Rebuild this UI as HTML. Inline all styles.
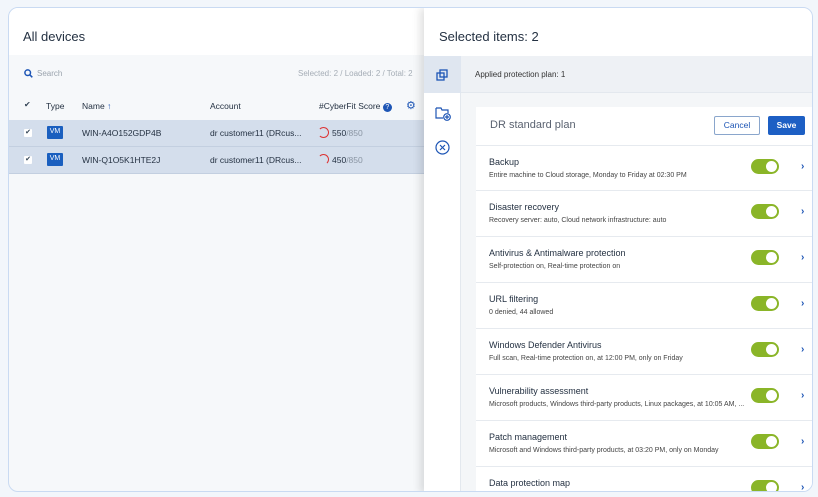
<!DOCTYPE html>
<html><head><style>
*{box-sizing:border-box;margin:0;padding:0}
body{width:818px;height:497px;background:#f2f6fb;font-family:"Liberation Sans",sans-serif;position:relative;overflow:hidden;color:#243142}
.frame{position:absolute;left:8px;top:7px;width:805px;height:485px;border:1px solid #c9daf2;border-radius:10px;background:#f6f8fa;overflow:hidden}
.lhead{position:absolute;left:0;top:0;width:420px;height:47px;background:#fff}
.abs{position:absolute;white-space:nowrap}
.row{position:absolute;left:0;width:420px;height:27px;background:#d4deec;border-bottom:1px solid #c3cfe0;font-size:8.5px}
.vm{position:absolute;left:38px;top:6px;width:16px;height:13px;background:#1a5fbf;color:#fff;font-size:7px;text-align:center;line-height:12px;border-radius:1px}
.cb{position:absolute;left:15px;top:9px;width:8px;height:8px;background:#fff;border-radius:1px;font-size:7px;line-height:8px;text-align:center;color:#345}
.right{position:absolute;left:415px;top:0;width:390px;height:485px;background:#fff;box-shadow:-4px 0 8px rgba(0,0,0,.12)}
.side{position:absolute;left:0;top:48px;width:37px;height:437px;background:#fff;border-right:1px solid #e3e8ee}
.gray{position:absolute;left:37px;top:48px;width:353px;height:437px;background:#f4f6f8}
.card{position:absolute;left:52px;top:99px;width:338px;height:400px;background:#fff}
.item{position:absolute;left:0;width:338px;height:46px;border-top:1px solid #e6eaef}
.t{position:absolute;left:13px;top:11px;font-size:9px;color:#243142}
.s{position:absolute;left:13px;top:26px;font-size:7px;color:#444}
.tg{position:absolute;left:275px;top:13px;width:28px;height:15px;border-radius:8px;background:#8ab528}
.tg:after{content:"";position:absolute;right:2px;top:2px;width:11px;height:11px;border-radius:50%;background:#fff}
.ch{position:absolute;left:325px;top:15px;font-size:10px;color:#1d55b5;font-weight:bold}
</style></head><body>
<div class="frame">
 <div class="lhead"><div class="abs" style="left:14px;top:21px;font-size:13px;color:#243142">All devices</div></div>
 <svg class="abs" style="left:15px;top:61px" width="9" height="9" viewBox="0 0 9 9" fill="none" stroke="#1d55b5" stroke-width="1.5"><circle cx="3.7" cy="3.7" r="2.8"/><path d="M5.8 5.8L8.3 8.3"/></svg>
 <div class="abs" style="left:28px;top:61px;font-size:8px;color:#9aa3ad">Search</div>
 <div class="abs" style="left:289px;top:61px;font-size:8px;color:#a5adb6">Selected: 2 / Loaded: 2 / Total: 2</div>
 <div class="abs" style="left:15px;top:92px;font-size:8px;color:#345">&#10004;</div>
 <div class="abs" style="left:37px;top:93px;font-size:8.5px">Type</div>
 <div class="abs" style="left:73px;top:93px;font-size:8.5px">Name <span style="color:#1d55b5">&#8593;</span></div>
 <div class="abs" style="left:201px;top:93px;font-size:8.5px">Account</div>
 <div class="abs" style="left:310px;top:93px;font-size:8.5px">#CyberFit Score <span style="display:inline-block;width:9px;height:9px;border-radius:50%;background:#1d55b5;color:#fff;font-size:7px;text-align:center;line-height:9px">?</span></div>
 <div class="abs" style="left:397px;top:91px;font-size:11px;color:#1d55b5">&#9881;</div>
 <div class="row" style="top:112px"><div class="cb">&#10004;</div><div class="vm">VM</div><div class="abs" style="left:73px;top:8px">WIN-A4O152GDP4B</div><div class="abs" style="left:201px;top:8px">dr customer11 (DRcus...</div><div class="abs" style="left:309px;top:7px;width:11px;height:11px;border-radius:50%;border:1.5px solid #d33;border-left-color:transparent"></div><div class="abs" style="left:323px;top:8px">550<span style="color:#8a95a3">/850</span></div></div>
 <div class="row" style="top:139px"><div class="cb">&#10004;</div><div class="vm">VM</div><div class="abs" style="left:73px;top:8px">WIN-Q1O5K1HTE2J</div><div class="abs" style="left:201px;top:8px">dr customer11 (DRcus...</div><div class="abs" style="left:309px;top:7px;width:11px;height:11px;border-radius:50%;border:1.5px solid #d33;border-left-color:transparent;border-bottom-color:transparent"></div><div class="abs" style="left:323px;top:8px">450<span style="color:#8a95a3">/850</span></div></div>
 <div class="right">
  <div class="abs" style="left:15px;top:21px;font-size:13px">Selected items: 2</div>
  <div class="side">
   <div style="position:absolute;left:0;top:0;width:37px;height:37px;background:#dfe6f0"></div>
   <svg class="abs" style="left:12px;top:13px" width="12" height="12" viewBox="0 0 12 12" fill="none" stroke="#1d55b5" stroke-width="1.3"><rect x="4" y="1" width="7" height="7"/><rect x="1" y="4" width="7" height="7"/></svg>
   <svg class="abs" style="left:11px;top:49px" width="16" height="16" viewBox="0 0 16 16" fill="none" stroke="#1d55b5" stroke-width="1.2"><path d="M1 3h5l1 2h6v3M1 3v10h7"/><circle cx="12" cy="12" r="3.3"/><path d="M12 10v4M10 12h4"/></svg>
   <svg class="abs" style="left:11px;top:84px" width="15" height="15" viewBox="0 0 15 15" fill="none" stroke="#1d55b5" stroke-width="1.2"><circle cx="7.5" cy="7.5" r="6.5"/><path d="M5 5l5 5M10 5l-5 5"/></svg>
  </div>
  <div class="gray">
   <div class="abs" style="left:0;top:0;width:353px;height:37px;background:#eef1f5;border-bottom:1px solid #e3e8ee"></div>
   <div class="abs" style="left:14px;top:14px;font-size:8px;color:#333">Applied protection plan: 1</div>
  </div>
  <div class="card">
   <div class="abs" style="left:14px;top:12px;font-size:11px;color:#5a6270">DR standard plan</div>
   <div class="abs" style="left:238px;top:9px;width:46px;height:19px;border:1px solid #8aa6cc;border-radius:2px;font-size:8.5px;color:#1d55b5;text-align:center;line-height:17px">Cancel</div>
   <div class="abs" style="left:292px;top:9px;width:37px;height:19px;background:#1d5fc4;border-radius:2px;font-size:8.5px;color:#fff;text-align:center;line-height:19px;font-weight:bold">Save</div>
   <div class="item" style="top:38px"><div class="t">Backup</div><div class="s">Entire machine to Cloud storage, Monday to Friday at 02:30 PM</div><div class="tg"></div><div class="ch">›</div></div>
   <div class="item" style="top:83px"><div class="t">Disaster recovery</div><div class="s">Recovery server: auto, Cloud network infrastructure: auto</div><div class="tg"></div><div class="ch">›</div></div>
   <div class="item" style="top:129px"><div class="t">Antivirus &amp; Antimalware protection</div><div class="s">Self-protection on, Real-time protection on</div><div class="tg"></div><div class="ch">›</div></div>
   <div class="item" style="top:175px"><div class="t">URL filtering</div><div class="s">0 denied, 44 allowed</div><div class="tg"></div><div class="ch">›</div></div>
   <div class="item" style="top:221px"><div class="t">Windows Defender Antivirus</div><div class="s">Full scan, Real-time protection on, at 12:00 PM, only on Friday</div><div class="tg"></div><div class="ch">›</div></div>
   <div class="item" style="top:267px"><div class="t">Vulnerability assessment</div><div class="s">Microsoft products, Windows third-party products, Linux packages, at 10:05 AM, ...</div><div class="tg"></div><div class="ch">›</div></div>
   <div class="item" style="top:313px"><div class="t">Patch management</div><div class="s">Microsoft and Windows third-party products, at 03:20 PM, only on Monday</div><div class="tg"></div><div class="ch">›</div></div>
   <div class="item" style="top:359px"><div class="t">Data protection map</div><div class="tg"></div><div class="ch">›</div></div>
  </div>
 </div>
</div>
</body></html>
